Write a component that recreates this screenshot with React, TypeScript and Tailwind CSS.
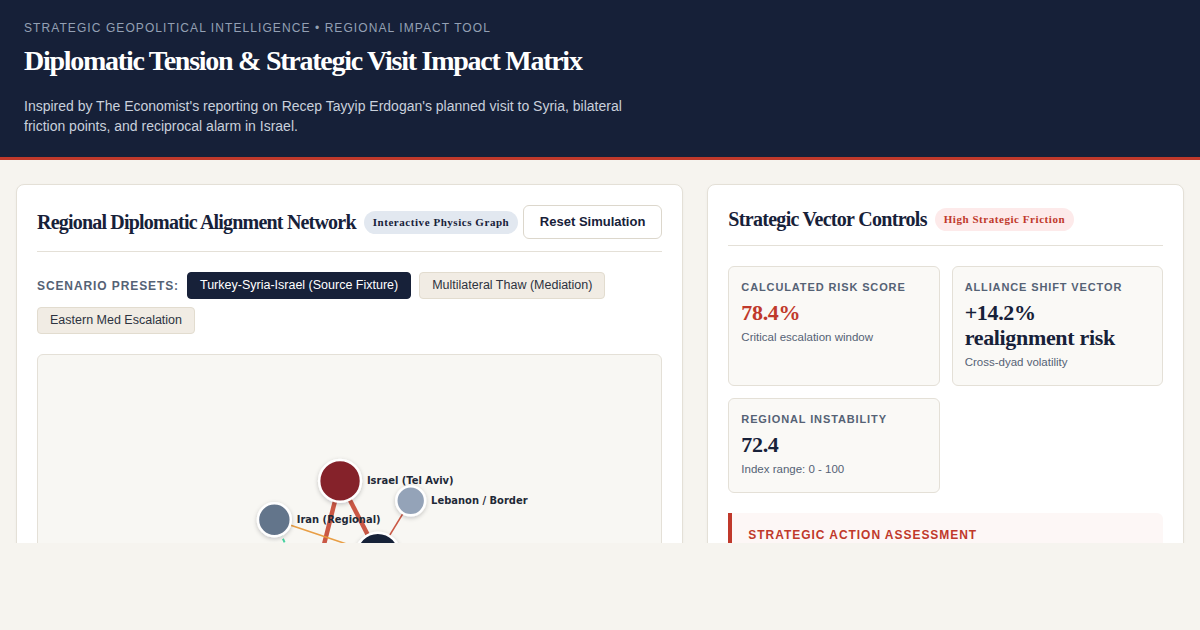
import React from 'react';

const SANS = "font-['Liberation_Sans',Arial,sans-serif]";
const SERIF = "font-['Liberation_Serif','Times_New_Roman',serif]";

const presets = [
  { label: 'Turkey-Syria-Israel (Source Fixture)', active: true },
  { label: 'Multilateral Thaw (Mediation)', active: false },
  { label: 'Eastern Med Escalation', active: false },
];

type Node = { id: string; label: string; x: number; y: number; r: number; fill: string };

const nodes: Node[] = [
  { id: 'israel', label: 'Israel (Tel Aviv)', x: 303.5, y: 126.5, r: 21, fill: '#85202b' },
  { id: 'lebanon', label: 'Lebanon / Border', x: 374.5, y: 146.5, r: 14.5, fill: '#94a3b8' },
  { id: 'iran', label: 'Iran (Regional)', x: 237.5, y: 165.5, r: 16.5, fill: '#64748b' },
  { id: 'turkey', label: 'Turkey (Ankara)', x: 341.5, y: 200.5, r: 22, fill: '#172139' },
  { id: 'syria', label: 'Syria (Damascus)', x: 273.5, y: 245.5, r: 20, fill: '#b45309' },
];

const edges = [
  { a: 'israel', b: 'syria', color: '#c8503c', w: 4.5, dash: '' },
  { a: 'israel', b: 'turkey', color: '#c8503c', w: 4.5, dash: '' },
  { a: 'lebanon', b: 'turkey', color: '#c8503c', w: 1.6, dash: '' },
  { a: 'iran', b: 'turkey', color: '#e89a3c', w: 1.6, dash: '' },
  { a: 'iran', b: 'syria', color: '#3fcf9c', w: 2, dash: '4 3' },
];

function NetworkGraph() {
  const byId = (id: string) => nodes.find((n) => n.id === id)!;
  return (
    <svg width="100%" height="100%" viewBox="0 0 624 420" preserveAspectRatio="xMinYMin meet">
      <defs>
        <filter id="nodeShadow" x="-50%" y="-50%" width="200%" height="200%">
          <feDropShadow dx="0" dy="1.5" stdDeviation="2" floodColor="#0f172a" floodOpacity="0.22" />
        </filter>
      </defs>
      {edges.map((e, i) => {
        const a = byId(e.a);
        const b = byId(e.b);
        return (
          <line
            key={i}
            x1={a.x}
            y1={a.y}
            x2={b.x}
            y2={b.y}
            stroke={e.color}
            strokeWidth={e.w}
            strokeDasharray={e.dash || undefined}
            opacity={0.95}
          />
        );
      })}
      {nodes.map((n) => (
        <g key={n.id}>
          <circle cx={n.x} cy={n.y} r={n.r} fill={n.fill} stroke="#ffffff" strokeWidth={2.5} filter="url(#nodeShadow)" />
          <text
            x={n.x + n.r + 6}
            y={n.y + 3.5}
            fontFamily="'DejaVu Sans', sans-serif"
            fontWeight={700}
            fontSize={10}
            fill="#1f2937"
          >
            {n.label}
          </text>
        </g>
      ))}
    </svg>
  );
}

function Metric({ label, value, sub, red }: { label: string; value: React.ReactNode; sub: string; red?: boolean }) {
  return (
    <div className="rounded-md border border-[#e4e0d7] bg-[#faf9f6] px-3 pt-3 pb-[15px]">
      <div className={`${SANS} text-[11px] leading-4 font-bold uppercase tracking-[0.08em] text-[#556275]`}>{label}</div>
      <div
        className={`${SERIF} mt-[5px] text-[22px] leading-[25px] font-bold tracking-[-0.015em] ${
          red ? 'text-[#c0392b]' : 'text-[#172139]'
        }`}
      >
        {value}
      </div>
      <div className={`${SANS} mt-1 text-[11.5px] leading-4 text-[#556275]`}>{sub}</div>
    </div>
  );
}

export default function App() {
  return (
    <div className={`${SANS} min-h-[630px] bg-[#f6f4ef]`}>
      <div className="h-[543px] overflow-hidden">
        <header className="border-b-[3px] border-[#c0392b] bg-[#162038] px-6 pt-5 pb-[21px]">
          <div className="text-[12px] leading-4 uppercase tracking-[0.09em] text-[#94a0b4]">
            Strategic Geopolitical Intelligence • Regional Impact Tool
          </div>
          <h1 className={`${SERIF} mt-2 text-[28px] leading-[34px] font-bold tracking-[-0.045em] text-white`}>
            Diplomatic Tension &amp; Strategic Visit Impact Matrix
          </h1>
          <p className="mt-[18px] max-w-[600px] text-[14px] leading-5 text-[#c9d0dc]">
            Inspired by The Economist's reporting on Recep Tayyip Erdogan's planned visit to Syria, bilateral friction
            points, and reciprocal alarm in Israel.
          </p>
        </header>

        <main className="grid grid-cols-[7fr_5fr] gap-6 px-4 pt-6">
          {/* left: network */}
          <section className="rounded-lg border border-[#e4e0d7] bg-white p-5 shadow-[0_1px_3px_rgba(0,0,0,0.04)]">
            <div className="flex items-center justify-between border-b border-[#e4e0d7] pb-3">
              <div className="flex items-center gap-2">
                <h2 className={`${SERIF} text-[20px] leading-7 font-bold tracking-[-0.04em] text-[#172139]`}>
                  Regional Diplomatic Alignment Network
                </h2>
                <span
                  className={`${SERIF} rounded-full bg-[#e2e8f0] px-[9px] py-1 text-[11px] leading-[15px] font-bold tracking-[0.05em] text-[#172139]`}
                >
                  Interactive Physics Graph
                </span>
              </div>
              <button className="rounded-md border border-[#dcd7cc] bg-white px-4 py-2 text-[13px] leading-4 font-bold text-[#172139]">
                Reset Simulation
              </button>
            </div>

            <div className="mt-5 flex flex-wrap items-center gap-2">
              <span className="text-[12px] leading-4 font-bold uppercase tracking-[0.075em] text-[#556275]">
                Scenario Presets:
              </span>
              {presets.map((p) => (
                <button
                  key={p.label}
                  className={`h-[27px] rounded border px-3 text-[12.5px] leading-[17px] ${
                    p.active
                      ? 'border-[#172139] bg-[#172139] text-white'
                      : 'border-[#e2dccf] bg-[#f1ece4] text-[#2d3340]'
                  }`}
                >
                  {p.label}
                </button>
              ))}
            </div>

            <div className="mt-5 h-[420px] rounded-md border border-[#e4e0d7] bg-[#f8f7f3]">
              <NetworkGraph />
            </div>
          </section>

          {/* right: controls */}
          <section className="rounded-lg border border-[#e4e0d7] bg-white p-5 shadow-[0_1px_3px_rgba(0,0,0,0.04)]">
            <div className="flex items-center gap-2 border-b border-[#e4e0d7] pb-3">
              <h2 className={`${SERIF} text-[20px] leading-7 font-bold tracking-[-0.035em] text-[#172139]`}>
                Strategic Vector Controls
              </h2>
              <span
                className={`${SERIF} rounded-full bg-[#fdeaea] px-[9px] py-1 text-[11px] leading-[15px] font-bold tracking-[0.05em] text-[#c0392b]`}
              >
                High Strategic Friction
              </span>
            </div>

            <div className="mt-5 grid grid-cols-2 gap-3">
              <Metric label="Calculated Risk Score" value="78.4%" sub="Critical escalation window" red />
              <Metric
                label="Alliance Shift Vector"
                value={
                  <>
                    +14.2%
                    <br />
                    realignment risk
                  </>
                }
                sub="Cross-dyad volatility"
              />
              <Metric label="Regional Instability" value="72.4" sub="Index range: 0 - 100" />
            </div>

            <div className="mt-5 rounded-r-md border-l-4 border-[#c0392b] bg-[#fdf7f6] px-4 pt-[14px] pb-4">
              <div className="text-[12px] leading-4 font-bold uppercase tracking-[0.08em] text-[#c0392b]">
                Strategic Action Assessment
              </div>
              <p className="mt-2 text-[13px] leading-5 text-[#334155]">
                Ankara's outreach to Damascus elevates friction along the northern corridor.
              </p>
            </div>
          </section>
        </main>
      </div>
    </div>
  );
}
